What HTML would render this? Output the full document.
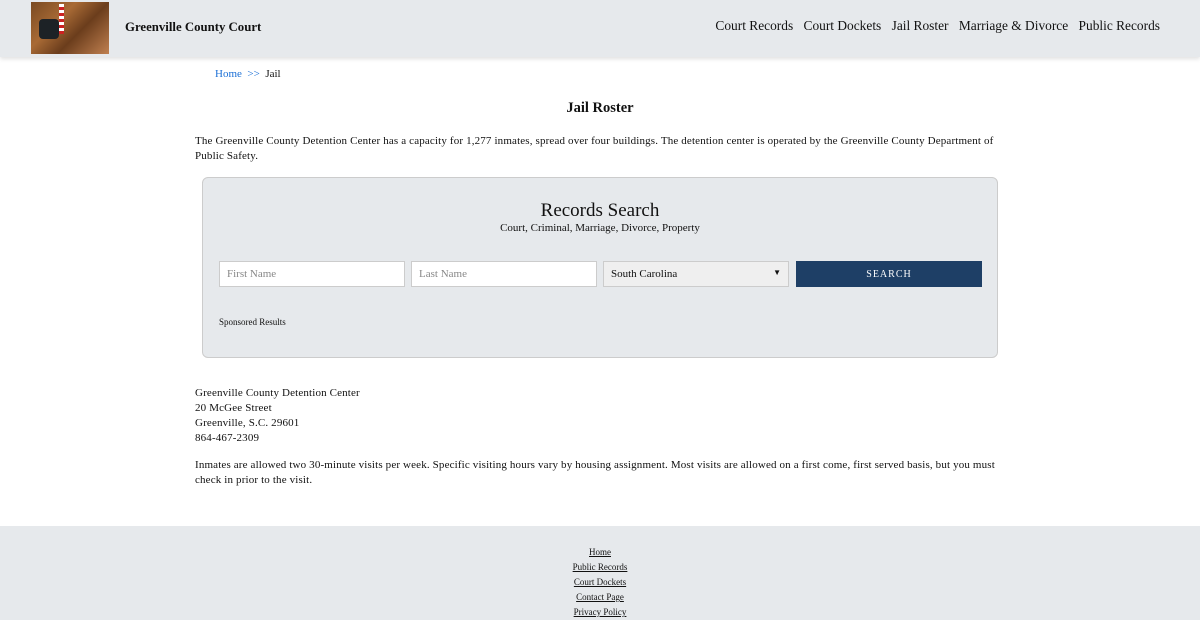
<!DOCTYPE html>
<html><head><meta charset="utf-8"><style>
*{box-sizing:border-box;margin:0;padding:0}
body{width:1200px;height:620px;overflow:hidden;font-family:"Liberation Serif",serif;color:#111;background:#fff;position:relative}
.hdr{position:absolute;left:0;top:0;width:1200px;height:57px;background:#e6e9ec;box-shadow:0 2px 4px rgba(0,0,0,.12)}
.logo{position:absolute;left:31px;top:2px;width:78px;height:52px;background:linear-gradient(135deg,#7a4a22 0%,#a86a35 35%,#6b3d1c 60%,#c08050 100%)}
.logo:before{content:"";position:absolute;left:8px;top:17px;width:20px;height:20px;background:#1d2226;border-radius:4px}
.logo:after{content:"";position:absolute;left:28px;top:2px;width:5px;height:30px;background:repeating-linear-gradient(#fff 0 3px,#c22 3px 6px)}
.title{position:absolute;left:125px;top:20px;font-size:12.8px;font-weight:bold}
.nav{position:absolute;right:40px;top:18px;font-size:13.4px;white-space:nowrap}
.nav span{margin-left:7px}
.bc{position:absolute;left:215px;top:68px;font-size:11px}
.bc a{color:#1a6fd6;text-decoration:none}
h1{position:absolute;left:0;width:1200px;text-align:center;top:100px;font-size:14.5px;font-weight:bold}
.p{position:absolute;left:195px;width:810px;font-size:11px;line-height:15px;letter-spacing:.15px}
.box{position:absolute;left:202px;top:177px;width:796px;height:181px;background:#e6e9ec;border:1px solid #ccc;border-radius:6px}
.box h2{position:absolute;width:100%;text-align:center;top:22px;font-size:19px;font-weight:normal}
.box .sub{position:absolute;width:100%;text-align:center;top:44px;font-size:11px}
.in{position:absolute;top:83px;height:26px;width:186px;background:#fff;border:1px solid #ccc;font-size:11px;color:#888;padding:6px 7px}
.btn{position:absolute;top:83px;left:593px;width:186px;height:26px;background:#1e3f66;color:#fff;font-size:10px;letter-spacing:1px;text-align:center;line-height:28px}
.sp{position:absolute;left:16px;top:139px;font-size:9px}
.ft{position:absolute;left:0;top:526px;width:1200px;height:94px;background:#e6e9ec;text-align:center;font-size:9px;line-height:15px;padding-top:19px}
.ft div{text-decoration:underline}
</style></head><body>
<div class="hdr"><div class="logo"></div><div class="title">Greenville County Court</div>
<div class="nav"><span>Court Records</span> <span>Court Dockets</span> <span>Jail Roster</span> <span>Marriage &amp; Divorce</span> <span>Public Records</span></div></div>
<div class="bc"><a>Home</a> &nbsp;<a>&gt;&gt;</a>&nbsp; Jail</div>
<h1>Jail Roster</h1>
<div class="p" style="top:134px">The Greenville County Detention Center has a capacity for 1,277 inmates, spread over four buildings. The detention center is operated by the Greenville County Department of Public Safety.</div>
<div class="box"><h2>Records Search</h2><div class="sub">Court, Criminal, Marriage, Divorce, Property</div>
<div class="in" style="left:16px">First Name</div><div class="in" style="left:208px">Last Name</div>
<div class="in" style="left:400px;background:#efefef;color:#111">South Carolina<span style="float:right;font-size:8px">&#9660;</span></div>
<div class="btn">SEARCH</div><div class="sp">Sponsored Results</div></div>
<div class="p" style="top:386px">Greenville County Detention Center<br>20 McGee Street<br>Greenville, S.C. 29601<br>864-467-2309</div>
<div class="p" style="top:458px">Inmates are allowed two 30-minute visits per week. Specific visiting hours vary by housing assignment. Most visits are allowed on a first come, first served basis, but you must check in prior to the visit.</div>
<div class="ft"><div>Home</div><div>Public Records</div><div>Court Dockets</div><div>Contact Page</div><div>Privacy Policy</div></div>
</body></html>
